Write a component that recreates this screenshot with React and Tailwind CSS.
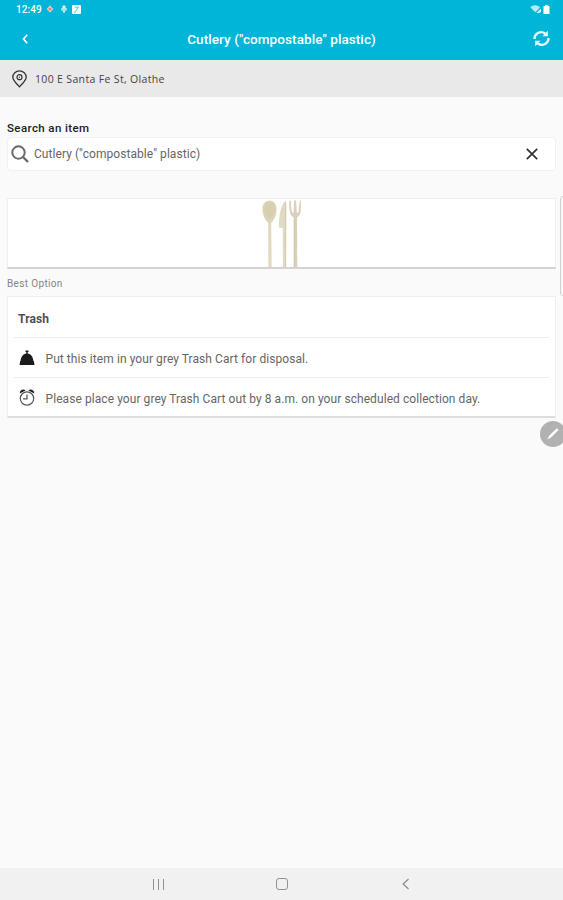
import React from 'react'

const ITEM = 'Cutlery ("compostable" plastic)'

const StatusBar = () => (
    <div className="flex h-[18px] items-center pl-4 pr-[13px] text-white">
        <span className="pt-[1px] text-[10px] font-medium leading-none tracking-[0.05px]">12:49</span>
        <svg className="ml-[4px] size-2" viewBox="0 0 8 8">
            <path d="M4 .5 7.2 4 4 7.5.8 4Z" fill="#f6d5cb" />
            <circle cx="4" cy="4" r="1.6" fill="#e2866f" />
        </svg>
        <svg className="ml-[6px] size-2" viewBox="0 0 8 8" fill="#d5f3fa">
            <rect x="2.4" y="0.2" width="3.2" height="4.6" rx="1.6" />
            <path d="M1 3.2h1.200C2.400 6 5.600 6 5.800 3.200H7C6.900 5 5.900 6 4.700 6.200V8H3.300V6.200C2.100 6 1.100 5 1 3.200Z" />
        </svg>
        <svg className="ml-[4px] size-[9px]" viewBox="0 0 9 9">
            <rect width="9" height="9" rx="1" fill="#f4fcfe" />
            <path d="M3 2.200h3.500L3.500 6.300M2 7h2" stroke="#5cc9e2" strokeWidth="1" fill="none" />
        </svg>
        <div className="ml-auto flex items-center gap-[1px]">
            <svg className="h-[10px] w-3" viewBox="0 0 12 10">
                <path d="M.3 3.200C2.500.5 7.500.4 10 3.200L6.300 7.600 5 8Z" fill="#b9e9f4" />
                <path d="M6.500 9 11 4.600V7.500L9.500 9Z" fill="#d9f4fa" />
            </svg>
            <svg className="h-[9px] w-[7px]" viewBox="0 0 7 9" fill="#fff">
                <path d="M2.200 0h2.600v1H6.500v8h-6V1h1.700Z" />
            </svg>
        </div>
    </div>
)

const Header = () => (
    <header className="h-[60px] bg-[#00b5d8] text-white">
        <StatusBar />
        <div className="grid h-[42px] grid-cols-[40px_1fr_40px] items-center">
            <svg className="ml-[21px] mt-[-1px] h-[10px] w-[9px]" viewBox="0 0 9 10" fill="none" stroke="currentColor" strokeWidth="1.6">
                <path d="M6.200.8 2.500 5 6.200 9.200" />
            </svg>
            <h1 className="pt-[1px] text-center text-[13.5px] font-medium tracking-[0.08px]">{ITEM}</h1>
            <svg className="ml-[10px] mt-[-1px] size-[17px]" viewBox="0 0 17 17" fill="none" stroke="#e9fafd" strokeWidth="2.300">
                <path d="M1.500 9C1.300 3.600 7.300.2 12.300 3.500" />
                <path d="M15.500 8C15.700 13.400 9.700 16.800 4.700 13.500" />
                <path d="M9.400 6.200h5.400V.7Z" fill="#e9fafd" stroke="none" />
                <path d="M7.600 10.800H2.200v5.500Z" fill="#e9fafd" stroke="none" />
            </svg>
        </div>
    </header>
)

const AddressBar = () => (
    <div className="flex h-[37px] items-center bg-[#e9e9e9] pl-3">
        <svg className="mt-[1px] h-[18px] w-[15px]" viewBox="0 0 15 18" fill="none" stroke="#333">
            <path d="M7.500 16.800C5.600 14.300.8 10.800.8 7.200a6.700 6.400 0 0 1 13.400 0c0 3.600-4.800 7.100-6.700 9.600Z" strokeWidth="1.300" />
            <circle cx="7.500" cy="7.200" r="2.500" strokeWidth="1.200" />
            <circle cx="7.500" cy="7.200" r="0.600" fill="#333" stroke="none" />
        </svg>
        <span className="ml-2 pt-[2px] font-['Open_Sans',sans-serif] text-[10.500px] tracking-[0.34px] text-[#444]">100 E Santa Fe St, Olathe</span>
    </div>
)

const SearchField = () => (
    <div>
        <label className="block h-[16px] text-[11.500px] font-medium leading-[16px] tracking-[0.4px] text-[#222]">Search an item</label>
        <div className="mt-[1px] flex h-[34px] items-center rounded-[4px] border border-[#f0f0f0] bg-white pl-[3px] pr-[17px]">
            <svg className="size-[18px]" viewBox="0 0 18 18" fill="none" stroke="#6b6b6b" strokeWidth="2">
                <circle cx="7.500" cy="7.500" r="6.200" />
                <path d="m12 12 5 5" strokeWidth="2.400" />
            </svg>
            <span className="ml-[5px] text-[12px] tracking-[0.06px] text-[#666]">{ITEM}</span>
            <svg className="ml-auto size-3" viewBox="0 0 12 12" stroke="#333" strokeWidth="1.700">
                <path d="m.8.8 10.400 10.400M11.200.8.8 11.200" />
            </svg>
        </div>
    </div>
)

const Cutlery = () => (
    <svg className="mr-[2px] h-[68px] w-[40px]" viewBox="0 0 40 68">
        {/* spoon */}
        <path d="M8.500 1.500c4.500 0 7.200 4 7.100 9C15.500 17 12.500 21.500 10.200 24L10.600 68H7.400L7.300 24C4.800 21.500 1.500 17 1.400 10.500c-.1-5 2.600-9 7.100-9Z" fill="#dcd5b9" />
        <path d="M8.500 3.500c3.200 0 5.200 3 5.200 7.500S11 18.500 8.500 20.500C6 18.500 3.300 15.500 3.300 11S5.300 3.500 8.500 3.500Z" fill="#d8ceb0" />
        <path d="M9 25v43" stroke="#e6e1c8" strokeWidth="0.800" />
        {/* knife */}
        <path d="M24.500 1.500c1 3 1 7.500.9 12L25 68h-3.200V29l-3.700-.5C17.600 18 19.500 6.500 24.500 1.500Z" fill="#e0dac2" />
        <path d="M24.600 3v65" stroke="#d0c7aa" strokeWidth="0.800" />
        {/* fork */}
        <path d="M28.400 1.500h1.300l1.100 12h1.800L33.100 1.500h2.100l.5 12h1.800L38.700 1.500h1.200c0 5 .1 9-.6 12.500-.5 2.600-2 3.500-3.300 4.500L36.300 68h-3.600L32.600 18.500c-1.200-.8-2.900-2-3.500-4.500-.8-4-.9-8-.7-12.500Z" fill="#dbd0b8" />
        <path d="M33.500 21v47" stroke="#cfc3ab" strokeWidth="0.800" />
    </svg>
)

const BellIcon = () => (
    <svg className="h-4 w-[16px]" viewBox="0 0 16 16" fill="#1b1b1b">
        <path d="M6.500.4h3v1.600h-.8v1.600C11.700 4 13.900 6.500 14.500 11.500h-13C2.100 6.500 4.300 4 7.300 3.600V2h-.8Z" />
        <path d="M1.200 11h13.600L15.500 15H.5Z" />
    </svg>
)

const ClockIcon = () => (
    <svg className="h-[17px] w-[16px]" viewBox="0 0 16 17" fill="none" stroke="#555">
        <circle cx="8" cy="9.500" r="6.700" strokeWidth="1.200" />
        <path d="M8 5.500v4.300H4" strokeWidth="1.200" />
        <path d="M.8 4.600C.6.800 4.500-.4 6.500 1.400ZM15.200 4.600C15.400.8 11.500-.4 9.500 1.400Z" fill="#222" stroke="none" />
    </svg>
)

const STEPS = [
    { icon: BellIcon, text: 'Put this item in your grey Trash Cart for disposal.' },
    { icon: ClockIcon, text: 'Please place your grey Trash Cart out by 8 a.m. on your scheduled collection day.' },
]

const OptionCard = () => (
    <section className="h-[122px] border border-b-2 border-[#eeeeee] border-b-[#dedede] bg-white px-[6px]">
        <h2 className="flex h-[40px] items-center pl-1 pt-[3px] text-[12px] font-bold tracking-[0.1px] text-[#505050]">Trash</h2>
        {STEPS.map(({ icon: Icon, text }) => (
            <div key={text} className="flex h-[40px] items-center border-t border-[#ededed] pl-[5px]">
                <Icon />
                <span className="ml-[10.500px] whitespace-nowrap pt-[2px] text-[12px] tracking-[0.07px] text-[#666]">{text}</span>
            </div>
        ))}
    </section>
)

const NavBar = () => (
    <nav className="flex h-8 items-center bg-[#f1f1f1] pl-[153px] text-[#929292]">
        <div className="flex h-[11px] w-[11px] justify-between">
            <i className="w-px bg-[#929292]"></i>
            <i className="w-px bg-[#929292]"></i>
            <i className="w-px bg-[#929292]"></i>
        </div>
        <div className="ml-[112px] size-3 rounded-[3px] border-[1.500px] border-[#929292]"></div>
        <svg className="ml-[114px] h-3 w-2" viewBox="0 0 8 12" fill="none" stroke="currentColor" strokeWidth="1.400">
            <path d="M6.500 1 1.200 6l5.300 5" />
        </svg>
    </nav>
)

export default function App() {
    return (
        <div className="relative flex h-[900px] w-full flex-col overflow-hidden bg-[#fafafa] font-['Roboto',sans-serif]">
            <Header />
            <AddressBar />
            <main className="flex-1 px-[7px] pt-[23px]">
                <SearchField />
                <div className="mt-[27px] flex h-[71px] justify-center border border-b-2 border-[#eeeeee] border-b-[#d3d3d3] bg-white">
                    <Cutlery />
                </div>
                <p className="flex h-[27px] items-center pt-[2px] text-[10px] tracking-[0.35px] text-[#858585]">Best Option</p>
                <OptionCard />
            </main>
            <NavBar />

            {/* edge panel handle */}
            <div className="absolute right-[-8px] top-[196px] h-[100px] w-[11px] rounded-[3px] border border-[#d2d2d2] bg-[#f8f8f8]"></div>

            {/* floating pen button */}
            <button className="absolute left-[540px] top-[421px] flex size-[26px] items-center justify-center rounded-full bg-[#b1b1b1]">
                <svg className="size-[14px]" viewBox="0 0 14 14" fill="#fff">
                    <path d="M10.800 1.300 12.600 3 5 10.400 1.200 12.500 3.200 8.700Z" />
                </svg>
            </button>
        </div>
    )
}
